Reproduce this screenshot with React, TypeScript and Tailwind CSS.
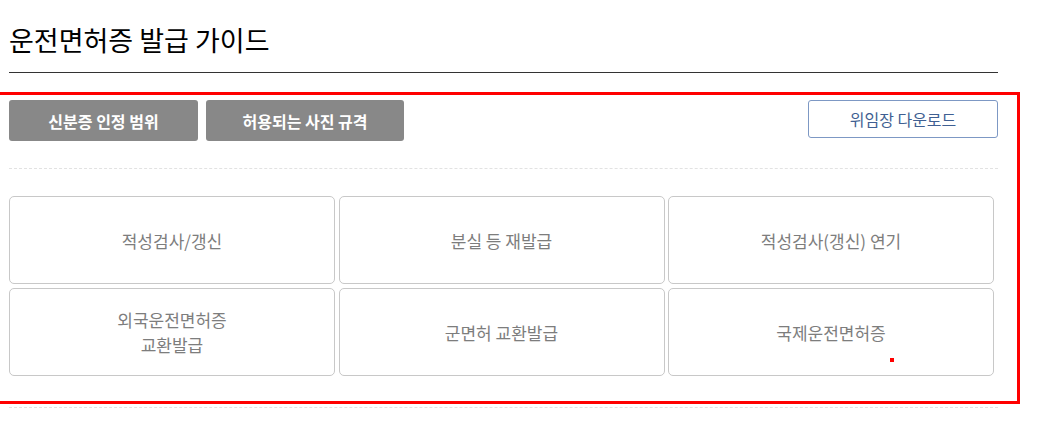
import React from "react";

const font = { fontFamily: '"Noto Sans CJK KR", "Noto Sans", sans-serif' };

function Card({ children }: { children: React.ReactNode }) {
  return (
    <div className="h-[88px] rounded-[5px] border border-[#c8c8c8] bg-white flex items-center justify-center text-center text-[17px] leading-[25px] text-[#7d7d7d]">
      {children}
    </div>
  );
}

export default function App() {
  return (
    <div className="relative w-[1049px] h-[425px] bg-white overflow-hidden" style={font}>
      <div className="ml-[9px] w-[989px]">
        <h2 className="pt-[20px] h-[73px] border-b border-[#333333] text-[27px] leading-[40px] text-black font-normal">
          운전면허증 발급 가이드
        </h2>
        <div className="pt-[27px]">
          <div className="flex items-start">
            <button className="w-[189px] h-[41px] rounded-[3px] bg-[#888888] text-white text-[16px] font-bold">
              신분증 인정 범위
            </button>
            <button className="ml-[8px] w-[198px] h-[41px] rounded-[3px] bg-[#888888] text-white text-[16px] font-bold">
              허용되는 사진 규격
            </button>
            <button className="ml-auto w-[190px] h-[38px] rounded-[3px] border border-[#7d98c4] bg-white text-[#3f5f92] text-[16px]">
              위임장 다운로드
            </button>
          </div>
          <div className="mt-[27px] border-t border-dashed border-[#e2e2e2]" />
          <div className="mt-[27px] w-[985px] grid grid-cols-3 gap-x-[3.5px] gap-y-[4px]">
            <Card>적성검사/갱신</Card>
            <Card>분실 등 재발급</Card>
            <Card>적성검사(갱신) 연기</Card>
            <Card>
              외국운전면허증
              <br />
              교환발급
            </Card>
            <Card>군면허 교환발급</Card>
            <Card>국제운전면허증</Card>
          </div>
          <div className="mt-[31px] border-t border-dashed border-[#e2e2e2]" />
        </div>
      </div>
      <div className="absolute left-[-3px] top-[92px] w-[1023px] h-[312px] border-[3px] border-[#ff0000] pointer-events-none" />
      <div className="absolute left-[890px] top-[358px] w-[4px] h-[4px] bg-[#ff0000]" />
    </div>
  );
}
